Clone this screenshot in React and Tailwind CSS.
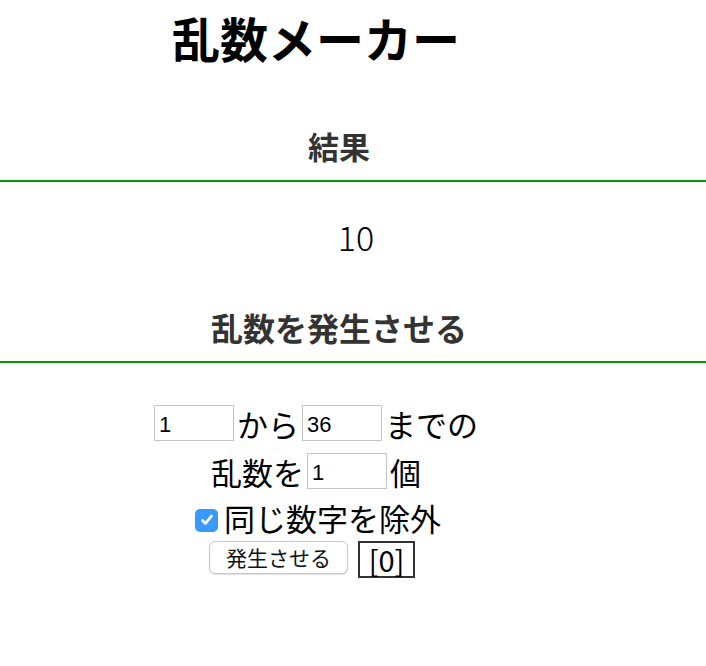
import { useState } from "react";

const jp = "font-['Noto_Sans_CJK_JP','Noto_Sans',sans-serif]";

function NumberBox({ value, onChange }) {
  return (
    <input
      className="h-[36px] w-[80px] border border-[#c4c4c4] bg-white pl-[4px] pt-[3px] font-['Liberation_Sans',sans-serif] text-[22px] leading-normal text-black outline-none"
      onChange={(e) => onChange(e.target.value)}
      type="text"
      value={value}
    />
  );
}

export default function App() {
  const [from, setFrom] = useState("1");
  const [to, setTo] = useState("36");
  const [count, setCount] = useState("1");
  const [unique, setUnique] = useState(true);

  return (
    <div className={`${jp} min-h-[666px] w-[706px] bg-white text-black`}>
      <div className="flex h-[74px] w-[632px] items-center justify-center">
        <h1 className="text-[48px] font-bold leading-none">乱数メーカー</h1>
      </div>

      <div className="mt-[37px] border-b-2 border-[#009a00]">
        <div className="flex h-[69px] w-[678px] items-center justify-center">
          <h2 className="text-[31px] font-bold leading-none text-[#333]">結果</h2>
        </div>
      </div>

      <div className="flex h-[110px] w-[712px] items-center justify-center">
        <span className="text-[34px] font-light leading-none">10</span>
      </div>

      <div className="border-b-2 border-[#009a00]">
        <div className="flex h-[69px] w-[678px] items-center justify-center">
          <h2 className="text-[32px] font-bold leading-none text-[#333]">乱数を発生させる</h2>
        </div>
      </div>

      <div className="flex w-[632px] flex-col items-center pt-[36px] text-[31px] leading-none">
        <div className="flex h-[48px] items-center gap-[3px]">
          <NumberBox onChange={setFrom} value={from} />
          <span>から</span>
          <NumberBox onChange={setTo} value={to} />
          <span>までの</span>
        </div>
        <div className="flex h-[48px] items-center gap-[3px]">
          <span>乱数を</span>
          <NumberBox onChange={setCount} value={count} />
          <span>個</span>
        </div>
        <div className="flex h-[44px] items-center gap-[6px] pl-[4px]">
          <button
            className="mt-[6px] flex h-[23px] w-[23px] items-center justify-center rounded-[5px] bg-[#3b99fc]"
            onClick={() => setUnique(!unique)}
            type="button"
          >
            {unique && (
              <svg fill="none" height="14" stroke="white" strokeLinecap="round" strokeLinejoin="round" strokeWidth="2.8" viewBox="0 0 14 14" width="14">
                <path d="M2.5 7.5 L5.5 10.5 L11.5 3" />
              </svg>
            )}
          </button>
          <span>同じ数字を除外</span>
        </div>
        <div className="flex h-[42px] items-start gap-[10px] pr-[8px] pt-[2px]">
          <button
            className="h-[33px] w-[139px] rounded-[6px] border border-[#c8c8c8] bg-white text-[21px] leading-none text-[#111] shadow-[0_1px_1px_rgba(0,0,0,0.12)]"
            type="button"
          >
            発生させる
          </button>
          <div className="flex h-[37px] w-[57px] items-center justify-center border-2 border-[#333] text-[29px] leading-none">
            [0]
          </div>
        </div>
      </div>
    </div>
  );
}
